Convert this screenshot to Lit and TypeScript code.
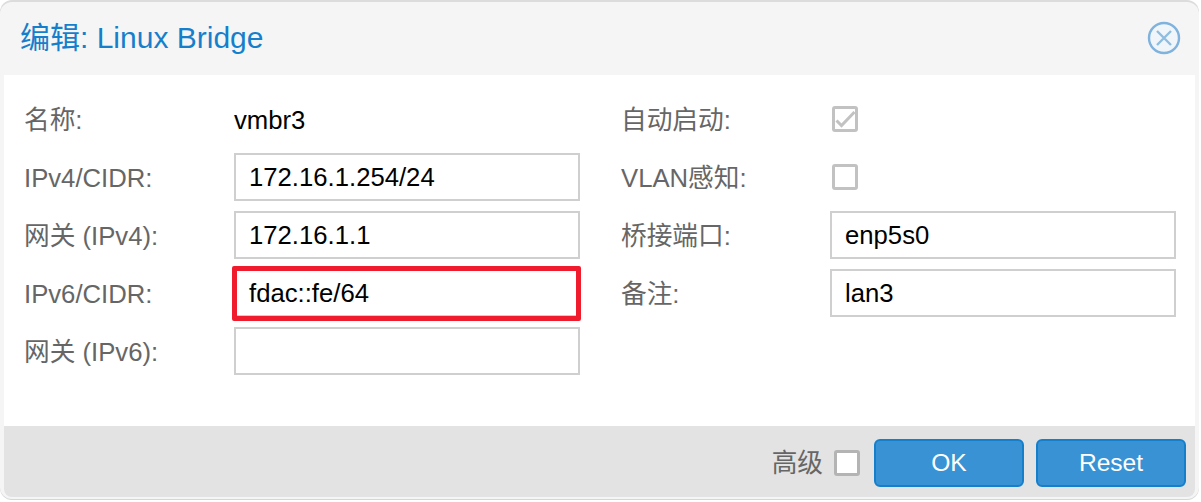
import { LitElement, html, css, svg } from "lit";
import { customElement } from "lit/decorators.js";

@customElement("app-root")
export class AppRoot extends LitElement {
  static styles = css`
    :host { display: block; width: 1201px; height: 502px; background: #fff; overflow: hidden; font-family: "Liberation Sans", "Noto Sans CJK SC", sans-serif; }
    .win { box-sizing: border-box; margin-top: 2px; width: 1199px; height: 497px; background: #f5f5f5; border-radius: 12px; padding: 0 4px 2px 4px; display: flex; flex-direction: column; box-shadow: 0 -2px 0 #dcdcdc, 0 1px 0 #d6d6d6; }
    .head { box-sizing: border-box; height: 73px; flex: none; display: flex; align-items: center; justify-content: space-between; padding: 0 13px 2px 16px; }
    .title { font-size: 30px; color: #157fcc; line-height: 34px; }
    .close { width: 36px; height: 36px; display: block; }
    .body { flex: 1; background: #fff; display: grid; grid-template-columns: 597px 1fr; padding: 20px 0 0 20px; }
    .col { display: flex; flex-direction: column; gap: 10px; }
    .row { display: flex; align-items: center; height: 48px; }
    .lbl { width: 210px; flex: none; font-size: 25.7px; line-height: 30px; color: #666; padding-top: 2px; }
    .r .lbl { width: 209px; }
    .val { font-size: 25.7px; line-height: 30px; color: #000; padding-top: 2px; }
    .inp { box-sizing: border-box; position: relative; width: 346px; height: 48px; border: 2px solid #cfcfcf; background: #fff; padding-left: 13px; font-size: 25.7px; color: #000; line-height: 44px; white-space: pre; }
    .mark { position: absolute; box-sizing: border-box; top: -5px; left: -4px; right: -3px; bottom: -6px; border: 5px solid #f01c2e; border-radius: 2px; }
    .cb { width: 26px; height: 26px; display: block; margin-left: 2px; }
    .foot { box-sizing: border-box; height: 71px; flex: none; background: #e3e3e3; display: flex; align-items: center; justify-content: flex-end; padding: 3px 9px 0 0; border-radius: 0 0 8px 8px; }
    .adv { font-size: 25.7px; line-height: 30px; color: #666; margin-right: 11px; }
    .foot .cb { margin: 0 14px 0 0; }
    .btn { box-sizing: border-box; width: 150px; height: 48px; background: #3892d4; border: 2px solid #157fcc; border-radius: 6px; color: #fff; font-size: 24.6px; display: flex; align-items: center; justify-content: center; }
    .btn + .btn { margin-left: 12px; }
  `;

  private box(checked = false, dark = false) {
    return html`<svg class="cb" viewBox="0 0 26 26" aria-hidden="true">
      <rect x="1.5" y="1.5" width="23" height="23" rx="1.5" fill="#fff" stroke="${dark ? "#b4b4b4" : "#c2c2c2"}" stroke-width="3"></rect>
      ${checked
        ? svg`<path d="M4.5 14.5l5 5L22.5 6" fill="none" stroke="#c2c2c2" stroke-width="3"></path>`
        : ""}
    </svg>`;
  }

  private field(label: string, value = "", hl = false) {
    return html`<div class="row"><span class="lbl">${label}</span><div class="inp">${value}${hl ? html`<div class="mark"></div>` : ""}</div></div>`;
  }

  render() {
    return html`<div class="win">
      <div class="head">
        <span class="title">编辑: Linux Bridge</span>
        <svg class="close" viewBox="0 0 36 36" aria-hidden="true">
          <circle cx="18" cy="18" r="15" fill="#f0f5fa" stroke="#7fb2dc" stroke-width="2.4"></circle>
          <path d="M11 11L25 25M25 11L11 25" stroke="#8fbde0" stroke-width="2.4" fill="none"></path>
        </svg>
      </div>
      <div class="body">
        <div class="col">
          <div class="row"><span class="lbl">名称:</span><span class="val">vmbr3</span></div>
          ${this.field("IPv4/CIDR:", "172.16.1.254/24")}
          ${this.field("网关 (IPv4):", "172.16.1.1")}
          ${this.field("IPv6/CIDR:", "fdac::fe/64", true)}
          ${this.field("网关 (IPv6):")}
        </div>
        <div class="col r">
          <div class="row"><span class="lbl">自动启动:</span>${this.box(true)}</div>
          <div class="row"><span class="lbl">VLAN感知:</span>${this.box()}</div>
          ${this.field("桥接端口:", "enp5s0")}
          ${this.field("备注:", "lan3")}
        </div>
      </div>
      <div class="foot">
        <span class="adv">高级</span>
        ${this.box(false, true)}
        <div class="btn">OK</div>
        <div class="btn">Reset</div>
      </div>
    </div>`;
  }
}
